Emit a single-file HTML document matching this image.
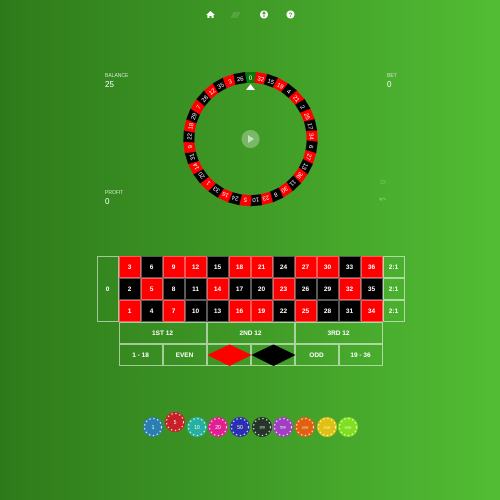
<!DOCTYPE html>
<html><head><meta charset="utf-8"><style>
*{margin:0;padding:0;box-sizing:border-box}
body{width:500px;height:500px;overflow:hidden;background:linear-gradient(90deg,#2e7a1b 0%,#3f9a26 50%,#52bd34 100%);font-family:"Liberation Sans",sans-serif;color:#fff;position:relative}
.lbl{position:absolute;font-size:5px;color:#cfe8c8}
.val{position:absolute;font-size:8px}
.c{position:absolute;width:22px;height:22px;display:flex;align-items:center;justify-content:center;font-size:6.5px;font-weight:bold;border:0.5px solid rgba(255,255,255,.35)}
.r{background:#f00}.b{background:#000}
.g{border:0.6px solid rgba(255,255,255,.55)}
</style></head><body>
<svg width="500" height="500" style="position:absolute;left:0;top:0">
<!-- top icons -->
<path d="M206 15 L210.5 11 L215 15 L213.6 15 L213.6 18 L211.5 18 L211.5 16 L209.5 16 L209.5 18 L207.4 18 L207.4 15Z" fill="#fff"/>
<g stroke="rgba(255,255,255,.3)" stroke-width="0.8"><line x1="233" y1="13" x2="240" y2="13"/><line x1="232" y1="15" x2="239" y2="15"/><line x1="231" y1="17" x2="238" y2="17"/></g>
<circle cx="264" cy="14.5" r="4" fill="#fff"/><path d="M264 12 v5 M262.5 13.5 l1.5 -1.5 l1.5 1.5" stroke="#3f9a26" stroke-width="1" fill="none"/>
<circle cx="290.5" cy="14.5" r="4" fill="#fff"/><text x="290.5" y="16.8" font-size="6" font-weight="bold" fill="#43a028" text-anchor="middle" font-family="Liberation Sans">?</text>
<!-- wheel -->
<g font-family="Liberation Sans" font-size="6" fill="#fff" text-anchor="middle">
<g transform="rotate(0 250.5 139)"><rect x="244.7" y="72" width="11.6" height="11" fill="#0a7a0a"/><text x="250.5" y="80">0</text></g>
<g transform="rotate(9.73 250.5 139)"><rect x="244.7" y="72" width="11.6" height="11" fill="#f00"/><text x="250.5" y="80">32</text></g>
<g transform="rotate(19.46 250.5 139)"><rect x="244.7" y="72" width="11.6" height="11" fill="#000"/><text x="250.5" y="80">15</text></g>
<g transform="rotate(29.19 250.5 139)"><rect x="244.7" y="72" width="11.6" height="11" fill="#f00"/><text x="250.5" y="80">19</text></g>
<g transform="rotate(38.92 250.5 139)"><rect x="244.7" y="72" width="11.6" height="11" fill="#000"/><text x="250.5" y="80">4</text></g>
<g transform="rotate(48.65 250.5 139)"><rect x="244.7" y="72" width="11.6" height="11" fill="#f00"/><text x="250.5" y="80">21</text></g>
<g transform="rotate(58.38 250.5 139)"><rect x="244.7" y="72" width="11.6" height="11" fill="#000"/><text x="250.5" y="80">2</text></g>
<g transform="rotate(68.11 250.5 139)"><rect x="244.7" y="72" width="11.6" height="11" fill="#f00"/><text x="250.5" y="80">25</text></g>
<g transform="rotate(77.84 250.5 139)"><rect x="244.7" y="72" width="11.6" height="11" fill="#000"/><text x="250.5" y="80">17</text></g>
<g transform="rotate(87.57 250.5 139)"><rect x="244.7" y="72" width="11.6" height="11" fill="#f00"/><text x="250.5" y="80">34</text></g>
<g transform="rotate(97.3 250.5 139)"><rect x="244.7" y="72" width="11.6" height="11" fill="#000"/><text x="250.5" y="80">6</text></g>
<g transform="rotate(107.03 250.5 139)"><rect x="244.7" y="72" width="11.6" height="11" fill="#f00"/><text x="250.5" y="80">27</text></g>
<g transform="rotate(116.76 250.5 139)"><rect x="244.7" y="72" width="11.6" height="11" fill="#000"/><text x="250.5" y="80">13</text></g>
<g transform="rotate(126.49 250.5 139)"><rect x="244.7" y="72" width="11.6" height="11" fill="#f00"/><text x="250.5" y="80">36</text></g>
<g transform="rotate(136.22 250.5 139)"><rect x="244.7" y="72" width="11.6" height="11" fill="#000"/><text x="250.5" y="80">11</text></g>
<g transform="rotate(145.95 250.5 139)"><rect x="244.7" y="72" width="11.6" height="11" fill="#f00"/><text x="250.5" y="80">30</text></g>
<g transform="rotate(155.68 250.5 139)"><rect x="244.7" y="72" width="11.6" height="11" fill="#000"/><text x="250.5" y="80">8</text></g>
<g transform="rotate(165.41 250.5 139)"><rect x="244.7" y="72" width="11.6" height="11" fill="#f00"/><text x="250.5" y="80">23</text></g>
<g transform="rotate(175.14 250.5 139)"><rect x="244.7" y="72" width="11.6" height="11" fill="#000"/><text x="250.5" y="80">10</text></g>
<g transform="rotate(184.86 250.5 139)"><rect x="244.7" y="72" width="11.6" height="11" fill="#f00"/><text x="250.5" y="80">5</text></g>
<g transform="rotate(194.59 250.5 139)"><rect x="244.7" y="72" width="11.6" height="11" fill="#000"/><text x="250.5" y="80">24</text></g>
<g transform="rotate(204.32 250.5 139)"><rect x="244.7" y="72" width="11.6" height="11" fill="#f00"/><text x="250.5" y="80">16</text></g>
<g transform="rotate(214.05 250.5 139)"><rect x="244.7" y="72" width="11.6" height="11" fill="#000"/><text x="250.5" y="80">33</text></g>
<g transform="rotate(223.78 250.5 139)"><rect x="244.7" y="72" width="11.6" height="11" fill="#f00"/><text x="250.5" y="80">1</text></g>
<g transform="rotate(233.51 250.5 139)"><rect x="244.7" y="72" width="11.6" height="11" fill="#000"/><text x="250.5" y="80">20</text></g>
<g transform="rotate(243.24 250.5 139)"><rect x="244.7" y="72" width="11.6" height="11" fill="#f00"/><text x="250.5" y="80">14</text></g>
<g transform="rotate(252.97 250.5 139)"><rect x="244.7" y="72" width="11.6" height="11" fill="#000"/><text x="250.5" y="80">31</text></g>
<g transform="rotate(262.7 250.5 139)"><rect x="244.7" y="72" width="11.6" height="11" fill="#f00"/><text x="250.5" y="80">9</text></g>
<g transform="rotate(272.43 250.5 139)"><rect x="244.7" y="72" width="11.6" height="11" fill="#000"/><text x="250.5" y="80">22</text></g>
<g transform="rotate(282.16 250.5 139)"><rect x="244.7" y="72" width="11.6" height="11" fill="#f00"/><text x="250.5" y="80">18</text></g>
<g transform="rotate(291.89 250.5 139)"><rect x="244.7" y="72" width="11.6" height="11" fill="#000"/><text x="250.5" y="80">29</text></g>
<g transform="rotate(301.62 250.5 139)"><rect x="244.7" y="72" width="11.6" height="11" fill="#f00"/><text x="250.5" y="80">7</text></g>
<g transform="rotate(311.35 250.5 139)"><rect x="244.7" y="72" width="11.6" height="11" fill="#000"/><text x="250.5" y="80">28</text></g>
<g transform="rotate(321.08 250.5 139)"><rect x="244.7" y="72" width="11.6" height="11" fill="#f00"/><text x="250.5" y="80">12</text></g>
<g transform="rotate(330.81 250.5 139)"><rect x="244.7" y="72" width="11.6" height="11" fill="#000"/><text x="250.5" y="80">35</text></g>
<g transform="rotate(340.54 250.5 139)"><rect x="244.7" y="72" width="11.6" height="11" fill="#f00"/><text x="250.5" y="80">3</text></g>
<g transform="rotate(350.27 250.5 139)"><rect x="244.7" y="72" width="11.6" height="11" fill="#000"/><text x="250.5" y="80">26</text></g>
</g>
<path d="M246 90 L250.5 84 L255 90Z" fill="#fff"/>
<circle cx="250.5" cy="139" r="9" fill="rgba(255,255,255,.3)"/>
<path d="M248 135 L254 139 L248 143Z" fill="rgba(255,255,255,.6)"/>
<text x="383" y="184" font-size="5" fill="rgba(255,255,255,.3)" text-anchor="middle" font-family="Liberation Sans">2X</text>
<path d="M380 200 q3 -3 6 0 M380 200 l0 -2.5 M380 200 l2.5 0" stroke="rgba(255,255,255,.35)" stroke-width="0.8" fill="none"/>
<!-- diamonds -->
<polygon points="207.5,355 229.5,344.5 251.5,355 229.5,366" fill="#f00"/>
<polygon points="251.5,355 273.5,344.5 295.5,355 273.5,366" fill="#000"/>
<!-- chips -->
<g font-family="Liberation Sans" fill="#fff" text-anchor="middle" font-size="5">
<g transform="translate(153 427)"><circle r="10" fill="#2a7fb0"/><circle r="8.5" fill="none" stroke="#fff" stroke-width="1.2" stroke-dasharray="1.5 2.5" opacity=".8"/><text y="2">1</text></g>
<g transform="translate(175 422)"><circle r="10" fill="#c82028"/><circle r="8.5" fill="none" stroke="#fff" stroke-width="1.2" stroke-dasharray="1.5 2.5" opacity=".8"/><text y="2">5</text></g>
<g transform="translate(197 427)"><circle r="10" fill="#25b0a0"/><circle r="8.5" fill="none" stroke="#fff" stroke-width="1.2" stroke-dasharray="1.5 2.5" opacity=".8"/><text y="2">10</text></g>
<g transform="translate(218 427)"><circle r="10" fill="#e02090"/><circle r="8.5" fill="none" stroke="#fff" stroke-width="1.2" stroke-dasharray="1.5 2.5" opacity=".8"/><text y="2">20</text></g>
<g transform="translate(240 427)"><circle r="10" fill="#2a30b0"/><circle r="8.5" fill="none" stroke="#fff" stroke-width="1.2" stroke-dasharray="1.5 2.5" opacity=".8"/><text y="2">50</text></g>
<g transform="translate(262 427)"><circle r="10" fill="#25352a"/><circle r="8.5" fill="none" stroke="#fff" stroke-width="1.2" stroke-dasharray="1.5 2.5" opacity=".8"/><text y="1.5" font-size="3.5">100</text></g>
<g transform="translate(283 427)"><circle r="10" fill="#a040c0"/><circle r="8.5" fill="none" stroke="#fff" stroke-width="1.2" stroke-dasharray="1.5 2.5" opacity=".8"/><text y="1.5" font-size="3.5">500</text></g>
<g transform="translate(305 427)"><circle r="10" fill="#e06010"/><circle r="8.5" fill="none" stroke="#fff" stroke-width="1.2" stroke-dasharray="1.5 2.5" opacity=".8"/><text y="1.5" font-size="3">1000</text></g>
<g transform="translate(327 427)"><circle r="10" fill="#e0c010"/><circle r="8.5" fill="none" stroke="#fff" stroke-width="1.2" stroke-dasharray="1.5 2.5" opacity=".8"/><text y="1.5" font-size="3">2000</text></g>
<g transform="translate(348 427)"><circle r="10" fill="#80e020"/><circle r="8.5" fill="none" stroke="#fff" stroke-width="1.2" stroke-dasharray="1.5 2.5" opacity=".8"/><text y="1.5" font-size="3">5000</text></g>
</g>
</svg>
<div class="lbl" style="left:105px;top:73px">BALANCE</div><div class="val" style="left:105px;top:80px">25</div>
<div class="lbl" style="left:387px;top:73px">BET</div><div class="val" style="left:387px;top:80px">0</div>
<div class="lbl" style="left:105px;top:190px">PROFIT</div><div class="val" style="left:105px;top:197px">0</div>

<div class="c g" style="left:96.5px;top:256px;height:66px">0</div>
<div class="c r" style="left:118.5px;top:256px">3</div><div class="c b" style="left:140.5px;top:256px">6</div><div class="c r" style="left:162.5px;top:256px">9</div><div class="c r" style="left:184.5px;top:256px">12</div><div class="c b" style="left:206.5px;top:256px">15</div><div class="c r" style="left:228.5px;top:256px">18</div><div class="c r" style="left:250.5px;top:256px">21</div><div class="c b" style="left:272.5px;top:256px">24</div><div class="c r" style="left:294.5px;top:256px">27</div><div class="c r" style="left:316.5px;top:256px">30</div><div class="c b" style="left:338.5px;top:256px">33</div><div class="c r" style="left:360.5px;top:256px">36</div><div class="c g" style="left:382.5px;top:256px">2:1</div>
<div class="c b" style="left:118.5px;top:278px">2</div><div class="c r" style="left:140.5px;top:278px">5</div><div class="c b" style="left:162.5px;top:278px">8</div><div class="c b" style="left:184.5px;top:278px">11</div><div class="c r" style="left:206.5px;top:278px">14</div><div class="c b" style="left:228.5px;top:278px">17</div><div class="c b" style="left:250.5px;top:278px">20</div><div class="c r" style="left:272.5px;top:278px">23</div><div class="c b" style="left:294.5px;top:278px">26</div><div class="c b" style="left:316.5px;top:278px">29</div><div class="c r" style="left:338.5px;top:278px">32</div><div class="c b" style="left:360.5px;top:278px">35</div><div class="c g" style="left:382.5px;top:278px">2:1</div>
<div class="c r" style="left:118.5px;top:300px">1</div><div class="c b" style="left:140.5px;top:300px">4</div><div class="c r" style="left:162.5px;top:300px">7</div><div class="c b" style="left:184.5px;top:300px">10</div><div class="c b" style="left:206.5px;top:300px">13</div><div class="c r" style="left:228.5px;top:300px">16</div><div class="c r" style="left:250.5px;top:300px">19</div><div class="c b" style="left:272.5px;top:300px">22</div><div class="c r" style="left:294.5px;top:300px">25</div><div class="c b" style="left:316.5px;top:300px">28</div><div class="c b" style="left:338.5px;top:300px">31</div><div class="c r" style="left:360.5px;top:300px">34</div><div class="c g" style="left:382.5px;top:300px">2:1</div>
<div class="c g" style="left:118.5px;top:322px;width:88px">1ST 12</div><div class="c g" style="left:206.5px;top:322px;width:88px">2ND 12</div><div class="c g" style="left:294.5px;top:322px;width:88px">3RD 12</div>
<div class="c g" style="left:118.5px;top:344px;width:44px">1 - 18</div><div class="c g" style="left:162.5px;top:344px;width:44px">EVEN</div><div class="c g" style="left:206.5px;top:344px;width:44px"></div><div class="c g" style="left:250.5px;top:344px;width:44px"></div><div class="c g" style="left:294.5px;top:344px;width:44px">ODD</div><div class="c g" style="left:338.5px;top:344px;width:44px">19 - 36</div>
<svg width="500" height="500" style="position:absolute;left:0;top:0;pointer-events:none">
<polygon points="207.5,355 229.5,344.5 251.5,355 229.5,366" fill="#f00"/>
<polygon points="251.5,355 273.5,344.5 295.5,355 273.5,366" fill="#000"/>
</svg>
</body></html>
